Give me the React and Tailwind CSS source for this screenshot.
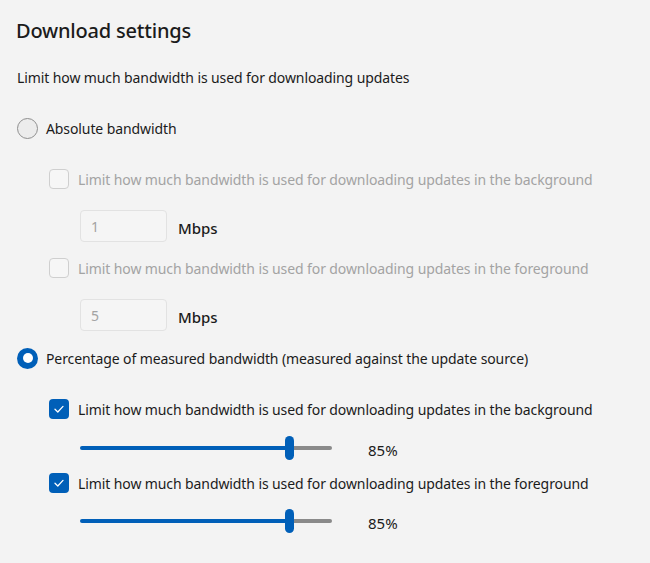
import React from "react";

const font = { fontFamily: '"Noto Sans", "Open Sans", sans-serif' };

function Radio({ checked, label }) {
  return (
    <div className="flex items-center h-[20px] ml-[1px]">
      {checked ? (
        <div className="w-[21px] h-[21px] rounded-full bg-[#005fb8] flex items-center justify-center">
          <div className="w-[10px] h-[10px] rounded-full bg-white" />
        </div>
      ) : (
        <div className="w-[21px] h-[21px] rounded-full border border-[#8f8f8f] bg-[#ececec]" />
      )}
      <span className="ml-[8px] text-[14px] text-[#1b1b1b] tracking-[-0.1px]">{label}</span>
    </div>
  );
}

function Checkbox({ checked, disabled, label }) {
  return (
    <div className="flex items-center h-[20px] ml-[33px]">
      {checked ? (
        <div className="w-[20px] h-[20px] rounded-[4px] bg-[#005fb8] flex items-center justify-center">
          <svg width="12" height="12" viewBox="0 0 12 12" fill="none">
            <path d="M2 6.3 L4.8 9 L10 3.4" stroke="white" strokeWidth="1.3" strokeLinecap="round" strokeLinejoin="round" />
          </svg>
        </div>
      ) : (
        <div className="w-[20px] h-[20px] rounded-[4px] border border-[#cfcfcf] bg-[#f6f6f6]" />
      )}
      <span
        className={
          "ml-[9px] text-[14px] tracking-[-0.1px] " +
          (disabled ? "text-[#a3a3a3]" : "text-[#1b1b1b]")
        }
      >
        {label}
      </span>
    </div>
  );
}

function NumberInput({ value }) {
  return (
    <div className="flex items-center ml-[64px] h-[32px]">
      <div className="w-[87px] h-[32px] rounded-[4px] border border-[#e2e2e2] bg-[#f5f5f5] flex items-center pl-[10px] text-[14px] text-[#a3a3a3]">
        {value}
      </div>
      <span className="ml-[11px] mt-[5px] text-[15px] font-medium text-[#1b1b1b]">Mbps</span>
    </div>
  );
}

function Slider({ pct }) {
  return (
    <div className="flex items-center ml-[64px] h-[24px]">
      <div className="relative w-[252px] h-[24px] flex items-center">
        <div className="w-[205px] h-[4px] bg-[#005fb8] rounded-l-full" />
        <div className="flex-1 h-[4px] bg-[#8a8a8a] rounded-r-full" />
        <div className="absolute left-[205px] top-0 w-[9px] h-[24px] rounded-full bg-[#005fb8]" />
      </div>
      <span className="ml-[36px] mt-[5px] text-[15px] text-[#1b1b1b]">{pct}%</span>
    </div>
  );
}

export default function App() {
  const bg = "Limit how much bandwidth is used for downloading updates in the background";
  const fg = "Limit how much bandwidth is used for downloading updates in the foreground";
  return (
    <div className="w-[650px] h-[563px] bg-[#f3f3f3] overflow-hidden" style={font}>
      <div className="flex flex-col pl-[16px]">
        <div className="mt-[16px] h-[30px] flex items-center text-[20px] font-medium text-[#1b1b1b] tracking-[-0.2px]">
          Download settings
        </div>
        <div className="mt-[21px] h-[20px] flex items-center text-[14px] text-[#1b1b1b] ml-[1px] tracking-[-0.1px]">
          Limit how much bandwidth is used for downloading updates
        </div>
        <div className="mt-[31px]">
          <Radio label="Absolute bandwidth" />
        </div>
        <div className="mt-[31px]">
          <Checkbox disabled label={bg} />
        </div>
        <div className="mt-[21px]">
          <NumberInput value="1" />
        </div>
        <div className="mt-[16px]">
          <Checkbox disabled label={fg} />
        </div>
        <div className="mt-[21px]">
          <NumberInput value="5" />
        </div>
        <div className="mt-[17px]">
          <Radio checked label="Percentage of measured bandwidth (measured against the update source)" />
        </div>
        <div className="mt-[31px]">
          <Checkbox checked label={bg} />
        </div>
        <div className="mt-[17px]">
          <Slider pct={85} />
        </div>
        <div className="mt-[13px]">
          <Checkbox checked label={fg} />
        </div>
        <div className="mt-[16px]">
          <Slider pct={85} />
        </div>
      </div>
    </div>
  );
}
